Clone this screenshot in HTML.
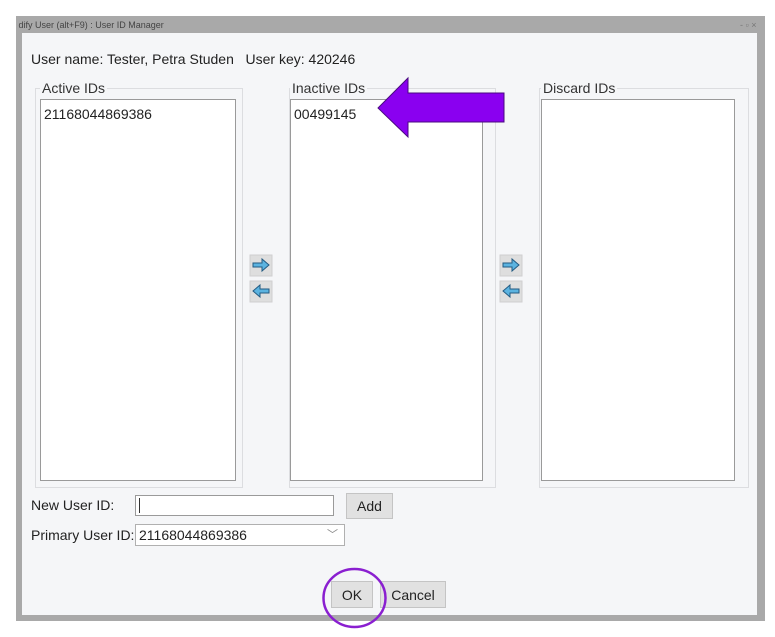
<!DOCTYPE html>
<html><head><style>
*{box-sizing:border-box}
body{margin:0;width:775px;height:637px;background:#fff;position:relative;overflow:hidden;font-family:"Liberation Sans",sans-serif;color:#222}
.a{position:absolute}
.win{left:16px;top:16px;width:749px;height:605px;background:#a9a9a9}
.content{left:22px;top:33px;width:735px;height:582px;background:#f5f6f8}
.fs{border:1px solid #dcdde0}
.list{background:#fff;border:1px solid #9a9a9a;font-size:14px;padding:6px 0 0 3px}
.lbl{font-size:14px;background:#f5f6f8;padding:0 2px;color:#333}
.btn{background:#e1e1e1;border:1px solid #c4c4c4;font-size:14px;text-align:center}
.ab{width:22px;height:21px;background:#dedede;border:1px solid #cfcfcf}
</style></head><body>
<div class="a win"></div>
<div class="a" style="left:16px;top:17px;font-size:9px;color:#444;line-height:16px">&nbsp;dify User (alt+F9) : User ID Manager</div>
<div class="a" style="left:740px;top:17px;font-size:9px;color:#777;line-height:16px">‑ ▫ ×</div>
<div class="a content"></div>
<div class="a" style="left:31px;top:51px;font-size:14px">User name: Tester, Petra Studen&nbsp;&nbsp; User key: 420246</div>

<div class="a fs" style="left:35px;top:88px;width:208px;height:400px"></div>
<div class="a lbl" style="left:40px;top:80px">Active IDs</div>
<div class="a list" style="left:40px;top:99px;width:196px;height:382px">21168044869386</div>

<div class="a fs" style="left:289px;top:88px;width:207px;height:400px"></div>
<div class="a lbl" style="left:290px;top:80px">Inactive IDs</div>
<div class="a list" style="left:290px;top:99px;width:193px;height:382px">00499145</div>

<div class="a fs" style="left:539px;top:88px;width:210px;height:400px"></div>
<div class="a lbl" style="left:541px;top:80px">Discard IDs</div>
<div class="a list" style="left:541px;top:99px;width:194px;height:382px"></div>

<svg class="a" style="left:0;top:0" width="775" height="637">
<g>
<rect x="250" y="255" width="22" height="21" fill="#dedede" stroke="#cfcfcf"/>
<rect x="250" y="281" width="22" height="21" fill="#dedede" stroke="#cfcfcf"/>
<rect x="500" y="255" width="22" height="21" fill="#dedede" stroke="#cfcfcf"/>
<rect x="500" y="281" width="22" height="21" fill="#dedede" stroke="#cfcfcf"/>
<path d="M253 263h9v-4l7 6-7 6v-4h-9z" fill="#5bb3e0" stroke="#235b82"/>
<path d="M269 289h-9v-4l-7 6 7 6v-4h9z" fill="#5bb3e0" stroke="#235b82"/>
<path d="M503 263h9v-4l7 6-7 6v-4h-9z" fill="#5bb3e0" stroke="#235b82"/>
<path d="M519 289h-9v-4l-7 6 7 6v-4h9z" fill="#5bb3e0" stroke="#235b82"/>
</g>
<path d="M378 108L408 78V93H504V122H408V137Z" fill="#8a00f0" stroke="#4a0a80" stroke-width="1"/>
</svg>

<div class="a" style="left:31px;top:497px;font-size:14px">New User ID:</div>
<div class="a" style="left:135px;top:495px;width:199px;height:21px;background:#fff;border:1px solid #9a9a9a"></div>
<div class="a" style="left:139px;top:498px;width:1px;height:15px;background:#333"></div>
<div class="a btn" style="left:346px;top:493px;width:47px;height:26px;line-height:24px">Add</div>
<div class="a" style="left:31px;top:527px;font-size:14px">Primary User ID:</div>
<div class="a" style="left:135px;top:524px;width:210px;height:22px;background:#fff;border:1px solid #b0b0b0;font-size:14px;padding:2px 3px">21168044869386</div>
<div class="a" style="left:327px;top:526px;font-size:11px;color:#888">﹀</div>
<div class="a btn" style="left:331px;top:581px;width:42px;height:27px;line-height:26px">OK</div>
<div class="a btn" style="left:380px;top:581px;width:66px;height:27px;line-height:26px">Cancel</div>
<svg class="a" style="left:0;top:0" width="775" height="637"><ellipse cx="354.5" cy="598" rx="31" ry="29" fill="none" stroke="#8a1fd0" stroke-width="2.5"/></svg>
</body></html>
